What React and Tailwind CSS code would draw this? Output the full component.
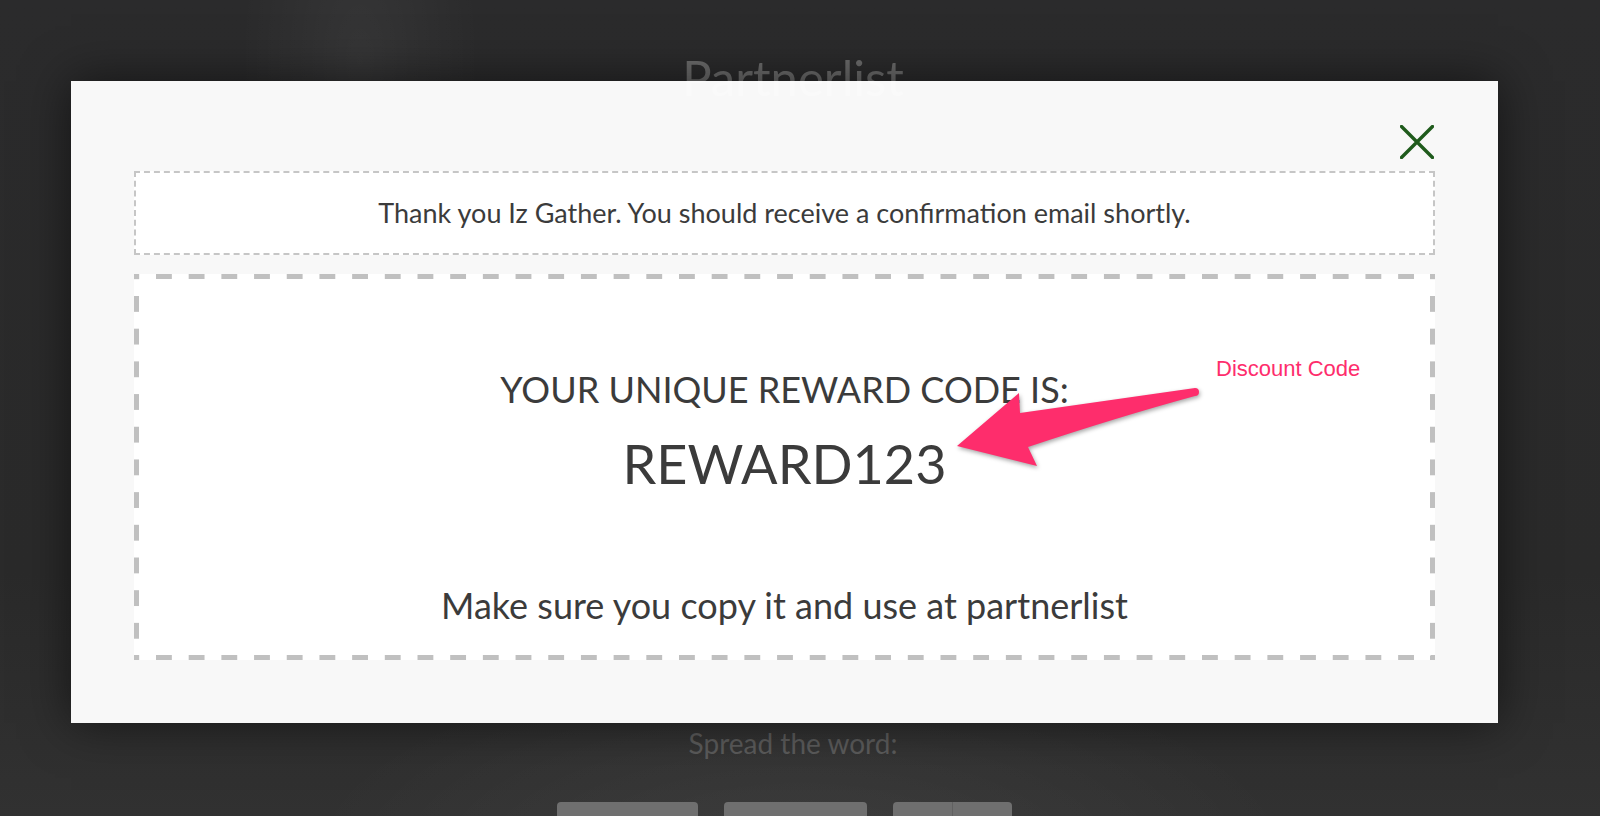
import React from "react";

const lato = "font-['Lato','Open_Sans',sans-serif]";

function CloseIcon() {
  return (
    <svg width="34" height="34" viewBox="0 0 34 34" fill="none" aria-hidden="true">
      <path d="M1.5 1.5 L32.5 32.5 M32.5 1.5 L1.5 32.5" stroke="#1f5b1c" strokeWidth="3.4" strokeLinecap="round" />
    </svg>
  );
}

function Annotation() {
  return (
    <>
      {/* pink callout arrow drawn over the modal */}
      <svg
        className="absolute left-[940px] top-[370px] h-[110px] w-[270px] drop-shadow-[1px_2px_2px_rgba(0,0,0,0.35)]"
        viewBox="940 370 270 110"
        aria-hidden="true"
      >
        <path
          d="M1195 388 L1020 413 L1019 393 L957 446 L1037 466 L1028 447 Q1118 417 1195 396 A4 4 0 0 0 1195 388 Z"
          fill="#fe2d6c"
        />
      </svg>
      <span className="absolute left-[1216px] top-[358px] text-[22px] leading-none text-[#fe2d6c] font-['Liberation_Sans',Arial,sans-serif]">
        Discount Code
      </span>
    </>
  );
}

export default function App() {
  return (
    <div
      className={`relative h-[816px] w-full overflow-hidden bg-[#2a2a2b] bg-[radial-gradient(ellipse_120px_260px_at_360px_60px,rgba(255,255,255,0.05),transparent),radial-gradient(ellipse_500px_200px_at_800px_860px,rgba(255,255,255,0.06),transparent),linear-gradient(180deg,#2b2b2c_0%,#2a2a2a_70%,#313131_100%)] ${lato}`}
    >
      {/* page behind the modal */}
      <div className="flex flex-col items-center pr-[14px] pt-[48px]">
        <h1 className="text-[49px] leading-[1.2] text-[#6b6b6b]">Partnerlist</h1>
        <p className="mt-[620px] text-[28px] leading-[1.2] text-[#5c5c5c]">Spread the word:</p>
        <div className="mr-[17px] mt-[42px] flex gap-[26px]">
          <div className="h-[40px] w-[141px] rounded-[4px] bg-[#6f6f6f]" />
          <div className="h-[40px] w-[143px] rounded-[4px] bg-[#6f6f6f]" />
          <div className="flex h-[40px] w-[119px] overflow-hidden rounded-[4px] bg-[#6f6f6f]">
            <div className="w-[60px] border-r border-[#616161]" />
          </div>
        </div>
      </div>

      {/* modal */}
      <div className="absolute left-[71px] top-[81px] w-[1427px] bg-white/[0.97] px-[63px] pb-[63px] pt-[44px] shadow-[0_0_45px_rgba(0,0,0,0.55)]">
        <div className="flex h-[33px] justify-end pr-[1px]">
          <button className="cursor-pointer" aria-label="Close">
            <CloseIcon />
          </button>
        </div>

        <div className="mt-[13px] flex h-[84px] items-center justify-center border-2 border-dashed border-[#c6c6c6] bg-white">
          <p className="text-[27px] leading-[1.2] text-[#3b3b3b]">
            Thank you Iz Gather. You should receive a confirmation email shortly.
          </p>
        </div>

        {/* thick dashed frame drawn with tiled gradients for long dashes */}
        <div className="mt-[19px] flex flex-col items-center bg-white bg-[linear-gradient(90deg,#c0c0c0_16px,transparent_16px),linear-gradient(90deg,#c0c0c0_16px,transparent_16px),linear-gradient(180deg,#c0c0c0_16px,transparent_16px),linear-gradient(180deg,#c0c0c0_16px,transparent_16px)] px-[5px] pb-[33px] pt-[94px] text-[#3b3b3b] [background-position:22px_0,22px_100%,0_22px,100%_22px] [background-repeat:repeat-x,repeat-x,repeat-y,repeat-y] [background-size:32.7px_5px,32.7px_5px,5px_32.7px,5px_32.7px]">
          <p className="text-[36px] leading-[1.2]">YOUR UNIQUE REWARD CODE IS:</p>
          <p className="mt-[21px] text-[54px] leading-[1.2]">REWARD123</p>
          <p className="mt-[87px] text-[36px] leading-[1.2]">Make sure you copy it and use at partnerlist</p>
        </div>
      </div>

      <Annotation />
    </div>
  );
}
